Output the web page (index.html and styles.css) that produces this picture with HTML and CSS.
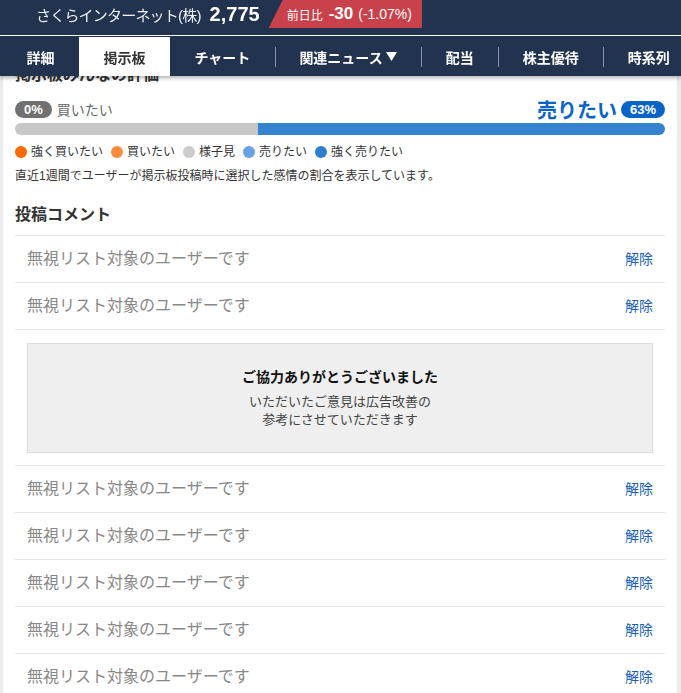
FILE: index.html
```html
<!DOCTYPE html>
<html lang="ja">
<head>
    <meta charset="UTF-8">
    <meta name="viewport" content="width=device-width, initial-scale=1.0">
    <title>さくらインターネット(株) 掲示板</title>
    <link rel="stylesheet" href="styles.css">
</head>
<body>
    <header class="header">
        <div class="topbar">
            <span class="stock-name">さくらインターネット(株)</span>
            <span class="stock-price">2,775</span>
            <span class="change">
                <span class="change-label">前日比</span>
                <span class="change-value">-30</span>
                <span class="change-rate">(-1.07%)</span>
            </span>
        </div>
        <nav class="tabs">
            <a class="tab first">詳細</a>
            <a class="tab active">掲示板</a>
            <a class="tab">チャート</a>
            <a class="tab sep">関連ニュース<svg class="caret" width="11" height="9" viewBox="0 0 11 9"><path d="M0 0h11L5.5 9z" fill="#fff"/></svg></a>
            <a class="tab sep">配当</a>
            <a class="tab sep">株主優待</a>
            <a class="tab sep">時系列</a>
        </nav>
    </header>

    <main class="card">
        <h2 class="section-title">掲示板みんなの評価</h2>

        <div class="sentiment">
            <div class="side">
                <span class="pill pill-gray">0%</span>
                <span class="buy-label">買いたい</span>
            </div>
            <div class="side">
                <span class="sell-label">売りたい</span>
                <span class="pill pill-blue">63%</span>
            </div>
        </div>
        <div class="bar">
            <div class="bar-seg wait" style="width:37.4%"></div>
            <div class="bar-seg strong-sell" style="width:62.6%"></div>
        </div>
        <ul class="legend">
            <li><i class="dot strong-buy"></i>強く買いたい</li>
            <li><i class="dot buy"></i>買いたい</li>
            <li><i class="dot wait"></i>様子見</li>
            <li><i class="dot sell"></i>売りたい</li>
            <li><i class="dot strong-sell"></i>強く売りたい</li>
        </ul>
        <p class="note">直近1週間でユーザーが掲示板投稿時に選択した感情の割合を表示しています。</p>

        <h2 class="section-title comments-title">投稿コメント</h2>
        <ul class="comments">
            <li class="comment"><span class="muted">無視リスト対象のユーザーです</span><a class="unmute">解除</a></li>
            <li class="comment"><span class="muted">無視リスト対象のユーザーです</span><a class="unmute">解除</a></li>
            <li class="feedback-row">
                <div class="feedback">
                    <div class="feedback-title">ご協力ありがとうございました</div>
                    <div class="feedback-text">いただいたご意見は広告改善の<br>参考にさせていただきます</div>
                </div>
            </li>
            <li class="comment"><span class="muted">無視リスト対象のユーザーです</span><a class="unmute">解除</a></li>
            <li class="comment"><span class="muted">無視リスト対象のユーザーです</span><a class="unmute">解除</a></li>
            <li class="comment"><span class="muted">無視リスト対象のユーザーです</span><a class="unmute">解除</a></li>
            <li class="comment"><span class="muted">無視リスト対象のユーザーです</span><a class="unmute">解除</a></li>
            <li class="comment"><span class="muted">無視リスト対象のユーザーです</span><a class="unmute">解除</a></li>
        </ul>
    </main>
</body>
</html>
```

FILE: styles.css
```css
html, body {
  height: 100%;
  overflow: hidden;
}
body {
  margin: 0;
  background: #ebebeb;
  font-family: "Liberation Sans", "Noto Sans CJK JP", sans-serif;
  color: #333;
}
ul {
  margin: 0;
  padding: 0;
  list-style: none;
}

/* header */
.header {
  position: fixed;
  top: 0;
  left: 0;
  right: 0;
  z-index: 10;
  background: #22334f;
  box-shadow: 0 2px 4px rgba(0,0,0,.3);
}
.topbar {
  display: flex;
  align-items: center;
  height: 28px;
  padding: 0 0 7px 36px;
  border-bottom: 1px solid #fff;
  margin-bottom: 1px;
  color: #fff;
}
.stock-name {
  font-size: 15px;
  letter-spacing: -0.8px;
  color: #eef0f4;
}
.stock-price {
  margin-left: 9px;
  font-size: 20px;
  font-weight: bold;
}
.change {
  display: flex;
  align-items: center;
  height: 28px;
  margin-left: 9px;
  padding: 0 10px 0 18px;
  background: #c9414a;
  clip-path: polygon(14px 0, 100% 0, 100% 100%, 0 100%);
}
.change-label {
  font-size: 12px;
}
.change-value {
  margin-left: 6px;
  font-size: 17px;
  font-weight: bold;
}
.change-rate {
  margin-left: 5px;
  font-size: 14px;
}
.tabs {
  display: flex;
  height: 39px;
  white-space: nowrap;
  overflow: hidden;
}
.tab {
  position: relative;
  display: flex;
  align-items: center;
  flex-shrink: 0;
  padding: 0 24.5px;
  font-size: 14px;
  font-weight: bold;
  color: #fff;
}
.tab.first {
  padding-left: 26.5px;
}
.tab.active {
  background: #fff;
  color: #333;
}
.tab.sep::before {
  content: "";
  position: absolute;
  left: 0;
  top: 10px;
  height: 20px;
  border-left: 1px solid #8a93a3;
}
.caret {
  margin-left: 3px;
}

/* content */
.card {
  margin: 0 4px 0 3px;
  padding: 64px 12px 0;
  background: #fff;
  min-height: 100%;
  box-sizing: border-box;
}
.section-title {
  margin: 0;
  font-size: 16px;
  line-height: 22px;
  font-weight: bold;
  color: #333;
}
.sentiment {
  display: flex;
  justify-content: space-between;
  align-items: center;
  height: 22px;
  margin-top: 12px;
}
.side {
  display: flex;
  align-items: center;
}
.pill {
  display: inline-block;
  height: 17px;
  line-height: 17px;
  padding: 0 9px;
  border-radius: 9px;
  font-size: 13px;
  font-weight: bold;
  color: #fff;
}
.pill-gray {
  background: #707070;
  margin-right: 5px;
}
.pill-blue {
  background: #0a64c8;
  margin-left: 4px;
}
.buy-label {
  font-size: 14px;
  color: #6a6a6a;
}
.sell-label {
  font-size: 20px;
  font-weight: bold;
  color: #0a64c8;
}
.bar {
  display: flex;
  height: 12px;
  margin-top: 3px;
  border-radius: 6px;
  overflow: hidden;
}
.bar-seg.wait { background: #c8c8c8; }
.bar-seg.strong-sell { background: #3483d1; }
.legend {
  display: flex;
  gap: 8px;
  margin-top: 8px;
  font-size: 12px;
  line-height: 18px;
}
.legend li {
  display: flex;
  align-items: center;
}
.dot {
  width: 12px;
  height: 12px;
  margin-right: 4px;
  border-radius: 50%;
}
.dot.strong-buy { background: #ff6a00; }
.dot.buy { background: #ff8c3c; }
.dot.wait { background: #cccccc; }
.dot.sell { background: #66a3e0; }
.dot.strong-sell { background: #2f7fd0; }
.note {
  margin: 6px 0 0;
  font-size: 12px;
  line-height: 18px;
}
.comments-title {
  margin-top: 19px;
  margin-bottom: 9px;
}
.comments {
  border-top: 1px solid #e6e6e6;
}
.comment {
  display: flex;
  justify-content: space-between;
  align-items: center;
  padding: 12px;
  border-bottom: 1px solid #e6e6e6;
  line-height: 22px;
}
.muted {
  font-size: 16px;
  color: #888;
}
.unmute {
  font-size: 14px;
  color: #1a5fb4;
}
.feedback-row {
  padding: 13px 12px 12px;
  border-bottom: 1px solid #e6e6e6;
}
.feedback {
  padding: 23px 0;
  background: #efefef;
  border: 1px solid #dcdcdc;
  text-align: center;
}
.feedback-title {
  font-size: 14px;
  line-height: 20px;
  font-weight: bold;
  color: #111;
  margin-bottom: 6px;
}
.feedback-text {
  font-size: 13px;
  line-height: 18px;
  color: #444;
}
```
